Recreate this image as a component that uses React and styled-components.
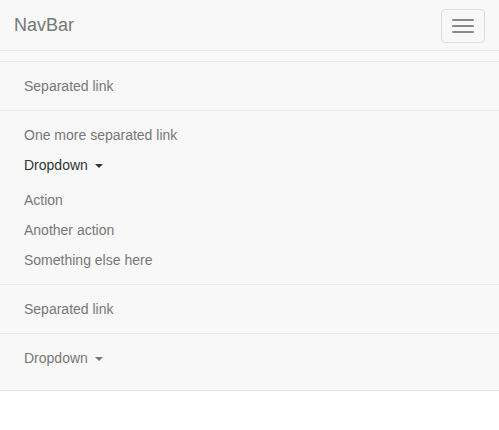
import React from 'react';
import styled, { createGlobalStyle } from 'styled-components';

const GlobalStyle = createGlobalStyle`
  html, body {
    margin: 0;
    padding: 0;
    background: #fff;
    font-family: "Liberation Sans", Arial, Helvetica, sans-serif;
    font-size: 14px;
    line-height: 20px;
    color: #333;
  }
`;

const NavBar = styled.nav`
  background: #f8f8f8;
  border-bottom: 1px solid #e7e7e7;
`;

const Header = styled.div`
  height: 50px;
  display: flex;
  align-items: center;
  justify-content: space-between;
  padding: 0 14px;
  border-bottom: 1px solid #e7e7e7;
`;

const Brand = styled.a`
  font-size: 18px;
  line-height: 20px;
  color: #777;
  text-decoration: none;
`;

const Toggle = styled.button`
  width: 44px;
  height: 34px;
  box-sizing: border-box;
  padding: 9px 10px;
  border: 1px solid #ddd;
  border-radius: 4px;
  background: transparent;
  display: flex;
  flex-direction: column;
  justify-content: space-between;
  align-items: center;
  margin-top: 1px;
`;

const IconBar = styled.span`
  display: block;
  width: 22px;
  height: 2px;
  border-radius: 1px;
  background: #888;
`;

const Collapse = styled.div`
  margin-top: 10px;
`;

const Section = styled.ul`
  list-style: none;
  margin: 0;
  padding: ${p => p.$pad || '9px 0'};
  border-top: 1px solid #e7e7e7;
`;

const Item = styled.li`
  display: block;
`;

const NavLink = styled.a`
  display: flex;
  align-items: center;
  height: 30px;
  padding: 0 24px;
  color: ${p => (p.$active ? '#333' : '#777')};
  text-decoration: none;
`;

const Caret = styled.span`
  display: inline-block;
  width: 0;
  height: 0;
  margin-left: 7px;
  margin-top: 1px;
  border-top: 4px solid currentColor;
  border-left: 4px solid transparent;
  border-right: 4px solid transparent;
`;

const Menu = styled.ul`
  list-style: none;
  margin: 5px 0 0;
  padding: 0;
`;

export default function App() {
  return (
    <>
      <GlobalStyle />
      <NavBar>
        <Header>
          <Brand href="#">NavBar</Brand>
          <Toggle aria-label="Toggle navigation">
            <IconBar />
            <IconBar />
            <IconBar />
          </Toggle>
        </Header>
        <Collapse>
          <Section>
            <Item><NavLink href="#">Separated link</NavLink></Item>
          </Section>
          <Section $pad="9px 0 9px">
            <Item><NavLink href="#">One more separated link</NavLink></Item>
            <Item>
              <NavLink href="#" $active>Dropdown<Caret /></NavLink>
              <Menu>
                <Item><NavLink href="#">Action</NavLink></Item>
                <Item><NavLink href="#">Another action</NavLink></Item>
                <Item><NavLink href="#">Something else here</NavLink></Item>
              </Menu>
            </Item>
          </Section>
          <Section>
            <Item><NavLink href="#">Separated link</NavLink></Item>
          </Section>
          <Section $pad="9px 0 17px">
            <Item><NavLink href="#">Dropdown<Caret /></NavLink></Item>
          </Section>
        </Collapse>
      </NavBar>
    </>
  );
}
